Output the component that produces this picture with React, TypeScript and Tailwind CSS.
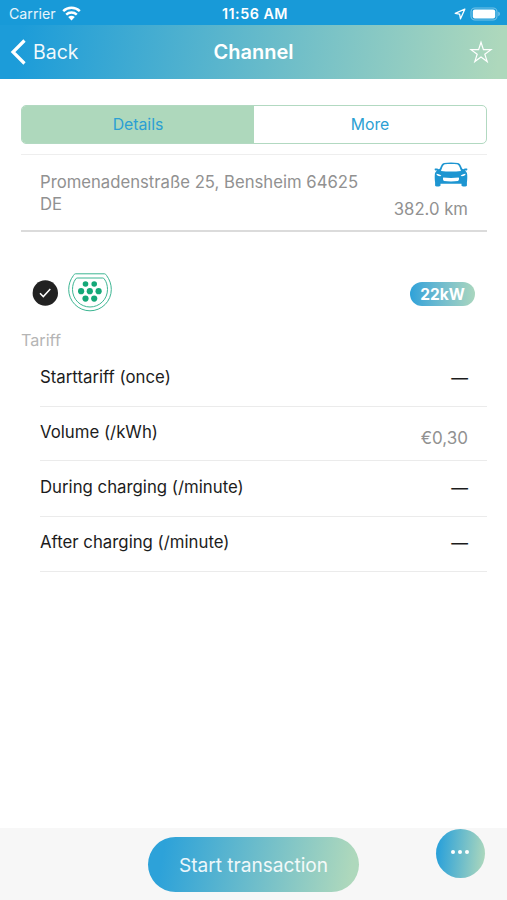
interface TariffRow {
	label: string
	price?: string
	className: string
}

const tariffRows: TariffRow[] = [
	{ label: "Starttariff (once)", className: "h-[55px] pt-[14px]" },
	{ label: "Volume (/kWh)", price: "€0,30", className: "h-[54px] pt-[14px]" },
	{ label: "During charging (/minute)", className: "h-[56px] pt-[15px]" },
	{ label: "After charging (/minute)", className: "h-[55px] pt-[14px]" },
]

const WifiIcon = () => (
	<svg width="19" height="15" viewBox="0 0 19 15" fill="none">
		<path
			d="M1.2 5.2a12 12 0 0 1 16.6 0M4.2 8.6a7.8 7.8 0 0 1 10.6 0"
			stroke="white"
			strokeWidth="2.5"
		/>
		<path d="M6.2 11.1a5 5 0 0 1 6.600 0L9.500 14.400Z" fill="white" />
	</svg>
)

const LocationIcon = () => (
	<svg width="12" height="12" viewBox="0 0 12 12" fill="none">
		<path
			d="M10.8 1.2 1.2 5.3l4.4.9.9 4.6Z"
			stroke="white"
			strokeWidth="1.3"
			strokeLinejoin="round"
		/>
	</svg>
)

const BatteryIcon = () => (
	<svg width="31" height="14" viewBox="0 0 31 14" fill="none">
		<rect
			x="1"
			y="1"
			width="26"
			height="12"
			rx="4"
			stroke="white"
			strokeOpacity="0.4"
			strokeWidth="1.1"
		/>
		<rect x="2.8" y="2.5" width="22.4" height="9" rx="2" fill="white" />
		<path d="M28.4 4.8c1.8.6 1.8 3.8 0 4.4Z" fill="white" fillOpacity="0.5" />
	</svg>
)

const StarIcon = () => (
	<svg width="24" height="24" viewBox="0 0 24 24" fill="none">
		<path
			d="M12 2.2 14.4 9.7H22L15.8 14.2 18.2 21.6 12 17.1 5.8 21.6 8.2 14.2 2 9.7H9.6Z"
			stroke="white"
			strokeWidth="1.2"
		/>
	</svg>
)

const CarIcon = () => (
	<svg width="34" height="25" viewBox="0 0 34 25">
		<path
			fill="#1d95d1"
			fillRule="evenodd"
			d="M10 1c4-.7 10-.7 14 0 1.800.4 2.600 2 4.200 5.800l1.600.5c.2-.8 1-1 3.200-.7.7.5.4 1.600-.3 1.900h-2c1.600 1 2.400 2.200 2.500 4.200.2 2.700 0 5.800-.3 7.800v2.900c0 1.400-5.200 1.400-5.400 0v-1.700H6.500v1.700c-.2 1.400-5.400 1.400-5.400 0v-2.900C.8 18.500.6 15.400.8 12.700c.1-2 .9-3.200 2.500-4.200h-2C.6 8.200.3 7.100 1 6.600c2.200-.3 3-.1 3.200.7l1.600-.5C7.400 3 8.200 1.400 10 1ZM11 2.300C9 2.600 8.100 6 7 9c6 .8 14 .8 20 0-1.100-3-2-6.400-4-6.700-3.600-.5-8.400-.5-12 0ZM2.400 11.800c.1 1.700 2 2.700 5 2.300-1-1.400-2.800-2.200-5-2.300Zm29.200 0c-2.200.1-4 .9-5 2.300 3 .4 4.900-.6 5-2.300ZM9.300 15.500c-.6.800-.4 2.700.7 3.600 4 .4 10 .4 14 0 1.100-.9 1.300-2.800.7-3.600-4.400.5-11 .5-15.400 0Z"
		/>
	</svg>
)

const CheckBadge = () => (
	<svg width="26" height="26" viewBox="0 0 26 26" fill="none">
		<circle cx="13.300" cy="13" r="12.700" fill="#222" />
		<path d="m8 13.300 3.300 3.300 7-7.500" stroke="white" strokeWidth="1.500" />
	</svg>
)

const PlugIcon = () => (
	<svg width="44" height="39" viewBox="0 0 44 39" fill="none">
		<path
			d="M7.500.8h29c1 0 1.400.8 2 1.600C41.700 6.600 43.300 11.500 43.300 16.500a21.300 21.300 0 0 1-42.600 0C.7 11.500 2.300 6.600 5.500 2.400 6.100 1.600 6.500.8 7.500.8Z"
			stroke="#3cb592"
		/>
		<path
			d="M9.200 5h25.600c.8 0 1.100.4 1.500 1C38.500 8.800 39.500 12.600 39.500 16.500a17.500 17.500 0 0 1-35 0C4.500 12.600 5.500 8.800 7.700 6c.4-.6.7-1 1.500-1Z"
			stroke="#3cb592"
		/>
		<g fill="#15a878">
			<circle cx="17.500" cy="11" r="2.800" />
			<circle cx="26.200" cy="11" r="2.800" />
			<circle cx="13.100" cy="18.200" r="3.100" />
			<circle cx="21.800" cy="18.200" r="3.100" />
			<circle cx="30.600" cy="18.200" r="3.100" />
			<circle cx="17.500" cy="25.600" r="3.100" />
			<circle cx="26.200" cy="25.600" r="3.100" />
		</g>
	</svg>
)

const StatusBar = () => (
	<div className="grid h-[25px] grid-cols-[1fr_auto_1fr] items-center bg-[#189ad8] pt-[2px] pr-[6px] pl-[9px] leading-[20px] text-white">
		<div className="flex items-center gap-[6px]">
			<span className="text-[14.2px] text-white/90">Carrier</span>
			<WifiIcon />
		</div>
		<span className="text-[14.3px] font-semibold tracking-[0.5px]">
			11:56 AM
		</span>
		<div className="flex items-center justify-end gap-[4px]">
			<LocationIcon />
			<BatteryIcon />
		</div>
	</div>
)

const Header = () => (
	<header className="grid h-[54px] grid-cols-[1fr_auto_1fr] items-center bg-[linear-gradient(97deg,#1c9cd9_4%,#aed8bc_98%)] pr-[14px] pl-[14px] text-white">
		<button className="-ml-1 flex items-center gap-[7px] text-[19.5px]">
			<svg width="16" height="26" viewBox="0 0 16 26" fill="none">
				<path d="M14.500 1.500 3 13l11.500 11.500" stroke="white" strokeWidth="3.200" />
			</svg>
			<span className="pt-[2px] text-white/95">Back</span>
		</button>
		<h1 className="text-[20px] font-semibold">Channel</h1>
		<button className="justify-self-end">
			<StarIcon />
		</button>
	</header>
)

export default function App() {
	return (
		<div className="flex h-[900px] w-[507px] flex-col overflow-hidden bg-white font-['Inter',sans-serif]">
			<StatusBar />
			<Header />

			<main className="flex-1 pr-[20px] pl-[21px]">
				<div className="mt-[26px] grid h-[39px] grid-cols-2 overflow-hidden rounded-[5px] border border-[#b2d9c1] text-[15.8px] text-[#2c9fd3]">
					<button className="bg-[#aed8bc]">Details</button>
					<button>More</button>
				</div>

				<section className="mt-[10px] flex h-[78px] justify-between border-t border-b-2 border-t-[#eee] border-b-[#dbdbdb] px-[19px] text-[16.7px] leading-[22px] text-[#919191]">
					<p className="w-[330px] pt-[16px]">
						Promenadenstraße 25, Bensheim 64625 DE
					</p>
					<div className="flex flex-col items-end pt-[7px]">
						<CarIcon />
						<span className="pt-[11px]">382.0 km</span>
					</div>
				</section>

				<div className="mt-[41px] flex h-[39px] items-center pr-[12px] pl-[11px]">
					<CheckBadge />
					<div className="ml-[10px]">
						<PlugIcon />
					</div>
					<span className="mt-[3px] ml-auto flex h-[24px] w-[65px] items-center justify-center rounded-full bg-linear-to-r from-[#2da2d9] to-[#a9d6be] pt-px text-[15.5px] font-bold text-white">
						22kW
					</span>
				</div>

				<h2 className="mt-[17px] text-[16.2px] leading-[22px] text-[#b5b5b5]">
					Tariff
				</h2>
				<ul className="mt-px ml-[19px] text-[16.8px] leading-[22px] text-[#1c1c1c]">
					{tariffRows.map((row) => (
						<li
							key={row.label}
							className={`flex justify-between border-b border-[#ebebeb] pr-[19px] ${row.className}`}
						>
							<span>{row.label}</span>
							{row.price ? (
								<span className="pt-[6px] text-[17px] text-[#919191]">
									{row.price}
								</span>
							) : (
								<span className="pt-px">—</span>
							)}
						</li>
					))}
				</ul>
			</main>

			<footer className="relative flex h-[72px] justify-center bg-[#f7f7f7] pt-[9px]">
				<button className="h-[55px] w-[211px] rounded-full bg-[linear-gradient(100deg,#2da2d9_8%,#aed8bc_95%)] pt-[2px] text-[19.1px] text-white/90">
					Start transaction
				</button>
				<button className="absolute top-px right-[22px] flex h-[49px] w-[49px] items-center justify-center gap-[3px] rounded-full bg-[linear-gradient(95deg,#2da2d9_8%,#aed8bc_98%)] pr-px pb-[3px]">
					<i className="h-[4px] w-[4px] rounded-full bg-white" />
					<i className="h-[4px] w-[4px] rounded-full bg-white" />
					<i className="h-[4px] w-[4px] rounded-full bg-white" />
				</button>
			</footer>
		</div>
	)
}
